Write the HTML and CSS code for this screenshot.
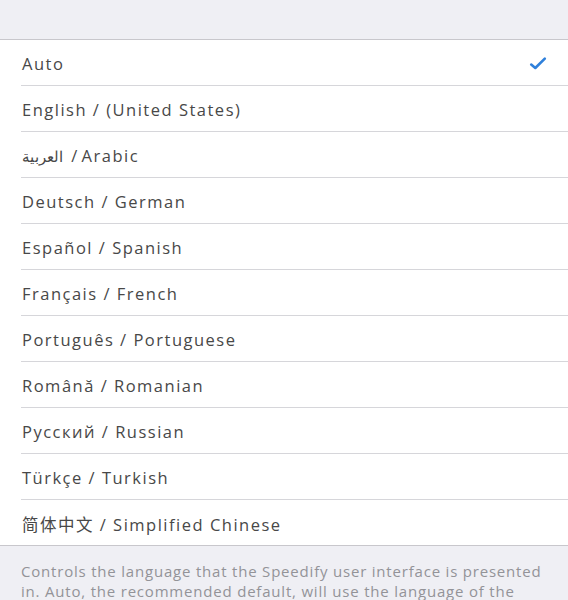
FILE: index.html
```html
<!DOCTYPE html>
<html>
<head>
<meta charset="utf-8">
<link rel="stylesheet" href="styles.css">
</head>
<body>
<div class="topbar"></div>
<ul class="list">
  <li class="row"><span class="label">Auto</span><svg class="check" width="18" height="14" viewBox="0 0 18 14"><path d="M2.2 8.6 L6.3 12 L15.8 2.6" fill="none" stroke="#2f80db" stroke-width="2.6" stroke-linecap="round" stroke-linejoin="round"/></svg></li>
  <li class="row"><span class="label">English / (United States)</span></li>
  <li class="row"><span class="label"><bdi class="ar">العربية</bdi> / Arabic</span></li>
  <li class="row"><span class="label">Deutsch / German</span></li>
  <li class="row"><span class="label">Español / Spanish</span></li>
  <li class="row"><span class="label">Français / French</span></li>
  <li class="row"><span class="label">Português / Portuguese</span></li>
  <li class="row"><span class="label">Română / Romanian</span></li>
  <li class="row"><span class="label">Русский / Russian</span></li>
  <li class="row"><span class="label">Türkçe / Turkish</span></li>
  <li class="row last"><span class="label">简体中文 / Simplified Chinese</span></li>
</ul>
<p class="footer">Controls the language that the Speedify user interface is presented in. Auto, the recommended default, will use the language of the operating system.</p>
</body>
</html>
```

FILE: styles.css
```css
html, body {
  margin: 0;
  padding: 0;
  background: #efeff4;
  font-family: "Open Sans", "Noto Sans CJK SC", sans-serif;
}
.topbar {
  height: 39px;
  background: #efeff4;
  border-bottom: 1px solid #c8c7cc;
}
.list {
  list-style: none;
  margin: 0;
  padding: 0 0 0 21px;
  background: #fff;
  border-bottom: 1px solid #c8c7cc;
}
.row {
  display: flex;
  align-items: center;
  justify-content: space-between;
  padding-right: 21px;
  padding-top: 2px;
  box-sizing: border-box;
  height: 46px;
  border-bottom: 1px solid #d6d6da;
  font-size: 16.5px;
  color: #484848;
}
.row.last {
  border-bottom: none;
  height: 45px;
}
.label {
  margin-left: 1px;
  letter-spacing: 1.5px;
}
.ar {
  letter-spacing: 0;
  font-size: 15px;
  margin-right: 4px;
}
.check {
  display: block;
  margin-top: -2px;
}
.footer {
  margin: 0;
  padding: 15px 12px 0 21px;
  font-size: 15px;
  line-height: 20px;
  letter-spacing: 0.8px;
  color: #939398;
}
```
